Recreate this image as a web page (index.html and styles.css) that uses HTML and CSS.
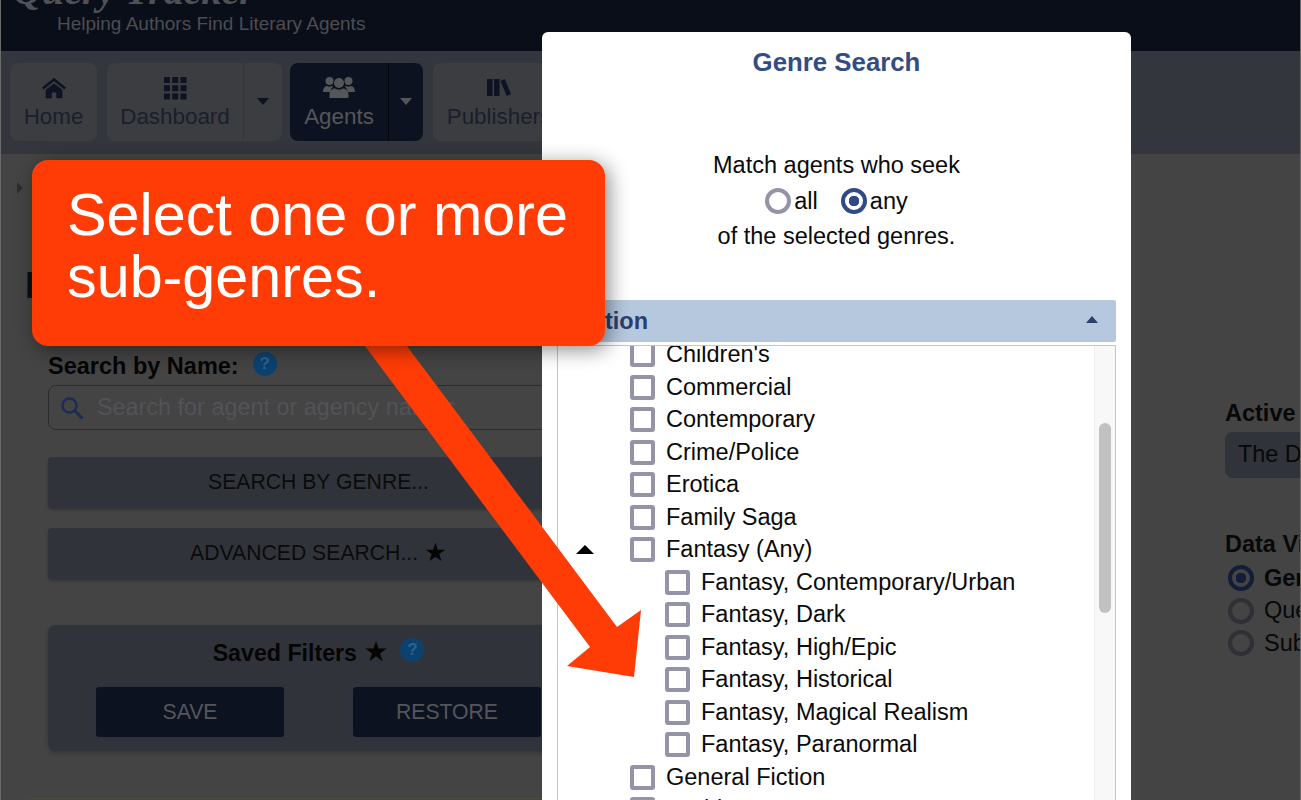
FILE: index.html
```html
<!DOCTYPE html>
<html lang="en">
<head>
<meta charset="utf-8">
<title>Genre Search</title>
<link rel="stylesheet" href="styles.css">
</head>
<body>
<div class="page">
  <header class="site-header">
    <div class="logo">Query Tracker</div>
    <div class="tagline">Helping Authors Find Literary Agents</div>
  </header>
  <nav class="nav">
    <div class="nav-btn nav-home">
      <svg class="nav-icon" width="24" height="24" viewBox="0 -1 26 24"><path d="M13 0 0 10.500l1.700 2L13 3.600l11.300 8.900 1.700-2z"/><path d="M13 6 4 13v9h6.500v-6h5v6H22v-9z"/></svg>
      <span>Home</span>
    </div>
    <div class="nav-group">
      <div class="nav-btn nav-dash">
        <svg class="nav-icon" width="24" height="24" viewBox="-1 -1 26 26"><path d="M0 0h6.500v6.500H0zM9 0h6.500v6.500H9zM18 0h6.500v6.500H18zM0 9h6.500v6.500H0zM9 9h6.500v6.500H9zM18 9h6.500v6.500H18zM0 18h6.500v6.500H0zM9 18h6.500v6.500H9zM18 18h6.500v6.500H18z"/></svg>
        <span>Dashboard</span>
      </div>
      <div class="nav-caret"><i class="caret-down"></i></div>
    </div>
    <div class="nav-group nav-active">
      <div class="nav-btn nav-agents">
        <svg class="nav-icon" width="32" height="24" viewBox="0 0 32 24"><circle cx="6.500" cy="5" r="4"/><circle cx="25.500" cy="5" r="4"/><circle cx="16" cy="7" r="5"/><path d="M0 16c0-4 2-6 4.500-6 1 .8 3.200.8 4 0 .6 0 1.200.2 1.700.5C8.500 12 7.500 14 7.300 16zM32 16c0-4-2-6-4.500-6-1 .8-3.200.8-4 0-.6 0-1.200.2-1.700.5 1.700 1.500 2.700 3.500 2.900 5.500zM6.500 22v-3c0-4 2.500-6.500 5.500-6.500 2 1.500 6 1.500 8 0 3 0 5.500 2.500 5.500 6.500v3z"/></svg>
        <span>Agents</span>
      </div>
      <div class="nav-caret"><i class="caret-down"></i></div>
    </div>
    <div class="nav-btn nav-pub">
      <svg class="nav-icon" width="24" height="24" viewBox="0 0 24 24"><path d="M0 3h5.500v17H0zM7 3h5.500v17H7zM13.500 5l4.300-2L24 18l-4.300 2z"/></svg>
      <span>Publishers</span>
    </div>
  </nav>
  <main class="content">
    <i class="crumb-arrow"></i>
    <div class="columns">
      <section class="left-col">
        <h1 class="page-title">Find Agents</h1>
        <div class="field-label"><b>Search by Name:</b><span class="help">?</span></div>
        <div class="search-input">
          <svg width="24" height="24" viewBox="0 0 24 24"><circle cx="9.500" cy="9.500" r="7" fill="none" stroke="#1b2b56" stroke-width="2.300"/><path d="m14.500 14.500 8 8" stroke="#1b2b56" stroke-width="3"/></svg>
          <span>Search for agent or agency names</span>
        </div>
        <div class="wide-btn">SEARCH BY GENRE...</div>
        <div class="wide-btn wide-second">ADVANCED SEARCH... <span class="star">★</span></div>
        <div class="filters">
          <div class="filters-title"><b>Saved Filters <span class="star">★</span></b><span class="help">?</span></div>
          <div class="filters-actions">
            <div class="dark-btn">SAVE</div>
            <div class="dark-btn">RESTORE</div>
          </div>
        </div>
        <div class="next-panel"></div>
      </section>
      <aside class="right-col">
        <div class="side-label">Active Work</div>
        <div class="side-select">The Dragon</div>
        <div class="side-label side-label-data">Data Visualization</div>
        <div class="side-radio"><i class="dim-radio dim-on"></i><b>Genres</b></div>
        <div class="side-radio"><i class="dim-radio"></i>Queries</div>
        <div class="side-radio"><i class="dim-radio"></i>Submissions</div>
      </aside>
    </div>
  </main>
</div>

<div class="modal">
  <h2 class="modal-title">Genre Search</h2>
  <div class="match">
    <div>Match agents who seek</div>
    <div class="match-options">
      <span class="opt"><i class="radio"></i>all</span>
      <span class="opt"><i class="radio radio-on"></i>any</span>
    </div>
    <div>of the selected genres.</div>
  </div>
  <div class="section-head"><span>Fiction</span><i class="caret-up"></i></div>
  <div class="list-box">
    <div class="rows">
      <div class="row"><i class="check"></i>Children's</div>
      <div class="row"><i class="check"></i>Commercial</div>
      <div class="row"><i class="check"></i>Contemporary</div>
      <div class="row"><i class="check"></i>Crime/Police</div>
      <div class="row"><i class="check"></i>Erotica</div>
      <div class="row"><i class="check"></i>Family Saga</div>
      <div class="row"><i class="toggle"></i><i class="check"></i>Fantasy (Any)</div>
      <div class="row sub"><i class="check"></i>Fantasy, Contemporary/Urban</div>
      <div class="row sub"><i class="check"></i>Fantasy, Dark</div>
      <div class="row sub"><i class="check"></i>Fantasy, High/Epic</div>
      <div class="row sub"><i class="check"></i>Fantasy, Historical</div>
      <div class="row sub"><i class="check"></i>Fantasy, Magical Realism</div>
      <div class="row sub"><i class="check"></i>Fantasy, Paranormal</div>
      <div class="row"><i class="check"></i>General Fiction</div>
      <div class="row"><i class="check"></i>Gothic</div>
    </div>
    <div class="scrollbar"><i class="thumb"></i></div>
  </div>
</div>

<svg class="arrow" width="300" height="350" viewBox="0 0 300 350"><path d="M63 0H105L315 281 339 264 332 331 265 320 288 301z" transform="translate(-64 0)" fill="#ff3c05"/></svg>

<div class="callout">Select one or more<br>sub-genres.</div>
</body>
</html>
```
FILE: styles.css
```css
* { box-sizing: border-box; }
html, body { margin: 0; height: 100%; }
body {
  width: 1301px;
  height: 800px;
  overflow: hidden;
  position: relative;
  font-family: "Liberation Sans", Arial, sans-serif;
  background: #444444;
}
.page {
  height: 800px;
  border-left: 1px solid #6b6b6b;
  border-right: 1px solid #6b6b6b;
  overflow: hidden;
}
.site-header {
  height: 51px;
  background: #0a0e19;
  overflow: hidden;
}
.logo {
  margin: -34px 0 0 12px;
  height: 50px;
  font: italic bold 40px/50px "Liberation Serif", serif;
  color: #505156;
  white-space: nowrap;
}
.tagline {
  margin: -3px 0 0 56px;
  font-size: 19px;
  line-height: 22px;
  color: #4c4d52;
  white-space: nowrap;
}
.nav {
  height: 103px;
  background: #34363d;
  padding: 12px 0 0 9px;
  display: flex;
  gap: 10px;
  overflow: hidden;
}
.nav-btn {
  height: 78px;
  background: #3c3d40;
  border-radius: 8px;
  display: flex;
  flex-direction: column;
  align-items: center;
  font-size: 22.400px;
  color: #1a1f2e;
  padding-top: 13px;
  flex: none;
}
.nav-btn span { margin-top: 3px; line-height: 28px; }
.nav-icon { fill: #0d1322; flex: none; }
.nav-home { width: 87px; }
.nav-group {
  display: flex;
  height: 78px;
  background: #3c3d40;
  border-radius: 8px;
  flex: none;
}
.nav-dash { width: 137px; border-radius: 8px 0 0 8px; border-right: 1px solid #34363a; }
.nav-caret { width: 38px; display: flex; align-items: center; justify-content: center; }
.caret-down {
  margin-top: -1px;
  border-left: 6.500px solid transparent;
  border-right: 6.500px solid transparent;
  border-top: 7px solid #0d1322;
}
.nav-active { background: #0c1220; margin-left: -2px; }
.nav-active .nav-btn { background: transparent; color: #55565a; }
.nav-active .nav-icon { fill: #55565a; }
.nav-active .caret-down { border-top-color: #55565a; }
.nav-agents { width: 99px; border-right: 1px solid #05070c; border-radius: 8px 0 0 8px; }
.nav-active .nav-caret { width: 34px; }
.nav-pub { width: 132px; }
.content {
  height: 646px;
  background: #444444;
  position: relative;
}
.crumb-arrow {
  position: absolute;
  left: 16px;
  top: 28px;
  border-top: 6px solid transparent;
  border-bottom: 6px solid transparent;
  border-left: 6px solid #2d2d2e;
}
.columns { display: flex; padding-left: 47px; }
.left-col { width: 541px; flex: none; }
.page-title {
  margin: 114px 0 0 -23px;
  height: 30px;
  font-size: 36px;
  line-height: 36px;
  color: #0a0e19;
  white-space: nowrap;
}
.field-label {
  margin-top: 52px;
  height: 32px;
  display: flex;
  align-items: center;
  gap: 14px;
  font-size: 23.500px;
  color: #050505;
}
.help {
  width: 24px;
  height: 24px;
  margin-top: -4px;
  border-radius: 50%;
  background: #0c4270;
  color: #2a6390;
  font: bold 17px/24px "Liberation Sans", sans-serif;
  text-align: center;
  flex: none;
}
.search-input {
  margin-top: 3px;
  height: 45px;
  border: 1px solid #2c2c2f;
  border-radius: 8px;
  display: flex;
  align-items: center;
  gap: 13px;
  padding-left: 11px;
  font-size: 23.400px;
  color: #525357;
  white-space: nowrap;
  overflow: hidden;
}
.search-input svg { flex: none; }
.wide-btn {
  margin-top: 27px;
  height: 51px;
  padding-bottom: 2px;
  background: #30343a;
  border-radius: 4px;
  box-shadow: 0 2px 3px rgba(0, 0, 0, .25);
  display: flex;
  align-items: center;
  justify-content: center;
  gap: 6px;
  font-size: 21.200px;
  color: #0b0b0c;
}
.wide-second { margin-top: 20px; }
.star { font-family: "DejaVu Sans", sans-serif; color: #050505; font-size: 1.200em; line-height: 1; }
.filters {
  margin-top: 46px;
  height: 126px;
  background: #30343a;
  border-radius: 8px;
  box-shadow: 0 2px 4px rgba(0, 0, 0, .25);
  padding-top: 12px;
}
.filters-title {
  height: 30px;
  display: flex;
  align-items: center;
  justify-content: center;
  gap: 12px;
  font-size: 23.200px;
  color: #050505;
}
.filters-actions {
  margin-top: 20px;
  display: flex;
  justify-content: center;
  gap: 69px;
}
.dark-btn {
  width: 188px;
  height: 50px;
  background: #0c1220;
  border-radius: 3px;
  display: flex;
  align-items: center;
  justify-content: center;
  font-size: 21.200px;
  color: #55565a;
}
.next-panel {
  margin: 47px 0 0 -22px;
  height: 20px;
  border-top: 1px solid #4e4c3c;
  border-radius: 6px 6px 0 0;
}
.right-col {
  margin-left: 636px;
  padding-top: 245px;
  width: 300px;
  flex: none;
  font-size: 23.500px;
  color: #080808;
  white-space: nowrap;
}
.side-label { font-weight: bold; height: 28px; line-height: 28px; }
.side-select {
  height: 46px;
  margin-top: 5px;
  background: #30343a;
  border-radius: 8px;
  padding-left: 13px;
  line-height: 44px;
  font-size: 23.400px;
}
.side-label-data { margin-top: 52px; }
.side-radio {
  height: 32.500px;
  display: flex;
  align-items: center;
  gap: 10px;
  padding-left: 3px;
}
.side-label-data + .side-radio { margin-top: 4px; }
.dim-radio {
  width: 26px;
  height: 26px;
  border-radius: 50%;
  border: 4px solid #2f3035;
  flex: none;
}
.dim-on {
  border-color: #141d38;
  background: radial-gradient(circle, #141d38 0 5px, transparent 5.500px);
}
.modal {
  position: absolute;
  left: 542px;
  top: 32px;
  width: 589px;
  height: 768px;
  background: #ffffff;
  border-radius: 6px 6px 0 0;
  padding: 0 15px;
  overflow: hidden;
}
.modal-title {
  margin: 14px 0 0;
  height: 32px;
  text-align: center;
  font-size: 25.800px;
  line-height: 32px;
  color: #324c84;
}
.match {
  margin-top: 70px;
  text-align: center;
  font-size: 23.500px;
  line-height: 35.500px;
  color: #0a0a0a;
}
.match-options { display: flex; justify-content: center; gap: 23px; }
.opt { display: flex; align-items: center; gap: 3px; }
.radio {
  width: 26px;
  height: 26px;
  border-radius: 50%;
  border: 4px solid #9593a8;
  flex: none;
}
.radio-on {
  border-color: #2f4a85;
  background: radial-gradient(circle, #2f4a85 0 5px, transparent 5.500px);
}
.section-head {
  margin-top: 45px;
  height: 42px;
  padding: 2px 18px 0 14px;
  background: #b6c8de;
  border-radius: 2px;
  display: flex;
  align-items: center;
  justify-content: space-between;
  font-size: 23.500px;
  font-weight: bold;
  color: #2b3f6e;
}
.caret-up {
  margin-top: -5px;
  border-left: 6.500px solid transparent;
  border-right: 6.500px solid transparent;
  border-bottom: 7px solid #2b3f6e;
}
.list-box {
  margin-top: 3px;
  height: 460px;
  width: 559px;
  border: 1px solid #b6c8de;
  display: flex;
  overflow: hidden;
}
.rows { flex: 1; margin-top: -7px; }
.row {
  height: 32.500px;
  padding-left: 72px;
  display: flex;
  align-items: center;
  gap: 11px;
  font-size: 23.500px;
  color: #0a0a0a;
  white-space: nowrap;
  position: relative;
}
.row.sub { padding-left: 107px; }
.check {
  width: 25px;
  height: 25px;
  border: 4px solid #9593a8;
  border-radius: 3px;
  flex: none;
}
.toggle {
  position: absolute;
  left: 18px;
  top: 11px;
  border-left: 9px solid transparent;
  border-right: 9px solid transparent;
  border-bottom: 9px solid #000000;
}
.scrollbar {
  width: 21px;
  flex: none;
  background: #f8f8f8;
  border-left: 1px solid #eeeeee;
  padding: 77px 0 0 4px;
}
.thumb {
  display: block;
  width: 12px;
  height: 190px;
  background: #c1c1c1;
  border-radius: 6px;
}
.arrow {
  position: absolute;
  left: 366px;
  top: 346px;
  overflow: visible;
}
.callout {
  position: absolute;
  left: 32px;
  top: 160px;
  width: 573px;
  height: 186px;
  padding: 24px 0 0 35px;
  background: #ff3c05;
  border-radius: 16px;
  box-shadow: 4px 4px 20px rgba(0, 0, 0, .45);
  color: #ffffff;
  font-size: 59.300px;
  line-height: 62px;
}
```
